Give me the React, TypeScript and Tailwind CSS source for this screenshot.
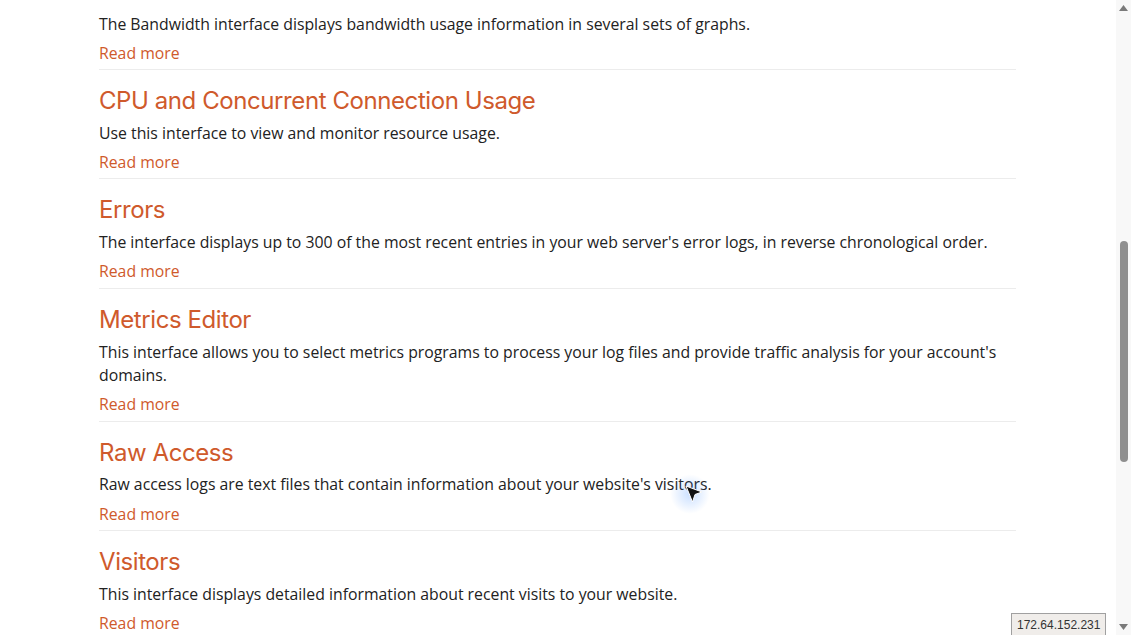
const items = [
  {
    title: "CPU and Concurrent Connection Usage",
    text: "Use this interface to view and monitor resource usage.",
  },
  {
    title: "Errors",
    text: "The interface displays up to 300 of the most recent entries in your web server's error logs, in reverse chronological order.",
  },
  {
    title: "Metrics Editor",
    text: "This interface allows you to select metrics programs to process your log files and provide traffic analysis for your account's domains.",
  },
  {
    title: "Raw Access",
    text: "Raw access logs are text files that contain information about your website's visitors.",
  },
  {
    title: "Visitors",
    text: "This interface displays detailed information about recent visits to your website.",
  },
];

function ReadMore() {
  return (
    <a href="#" className="block text-[15.8px] leading-[23.4px] text-[#cf5a2c]">
      Read more
    </a>
  );
}

export default function App() {
  return (
    <div className="relative flex h-[635px] w-full overflow-hidden bg-white font-['Open_Sans',sans-serif] text-[#222]">
      {/* Page content */}
      <div className="flex-1 pl-[99px] pr-[100px]">
        <div className="border-b border-[#ececec] pt-[12.5px] pb-[3.7px]">
          <p className="mb-[6px] text-[15.8px] leading-[23.4px]">
            The Bandwidth interface displays bandwidth usage information in several sets of graphs.
          </p>
          <ReadMore />
        </div>
        {items.map((item) => (
          <div key={item.title} className="border-b border-[#ececec] pt-[16px] pb-[4px]">
            <h2 className="mb-[6.2px] font-['Inter',sans-serif] text-[24px] leading-[29.6px] font-normal tracking-[-0.42px] text-[#cf5a2c]">
              {item.title}
            </h2>
            <p className="mb-[5.8px] text-[15.8px] leading-[23.4px]">{item.text}</p>
            <ReadMore />
          </div>
        ))}
      </div>

      {/* Scrollbar */}
      <div className="flex w-[15px] flex-col items-center bg-[#f8f8f8]">
        <svg width="9" height="6" viewBox="0 0 9 6" className="mt-[5px]">
          <path d="M4.5 0 L9 6 L0 6 Z" fill="#7a7a7a" />
        </svg>
        <div className="mt-[230px] h-[221px] w-[8px] rounded-full bg-[#8f8f8f]" />
        <div className="flex-1" />
        <svg width="9" height="6" viewBox="0 0 9 6" className="mb-[5px]">
          <path d="M0 0 L9 0 L4.5 6 Z" fill="#7a7a7a" />
        </svg>
      </div>

      {/* Status IP */}
      <div className="absolute left-[1011px] top-[613px] h-[24px] border border-[#a0a0a0] bg-[#f0edea] px-[5px] pt-[3px] font-['Liberation_Sans',sans-serif] text-[12px] leading-[16px] text-[#333]">
        172.64.152.231
      </div>

      {/* Mouse cursor */}
      <div className="absolute left-[670px] top-[474px] h-[40px] w-[40px] rounded-full bg-[radial-gradient(circle,rgba(80,150,255,0.3)_0%,rgba(80,150,255,0)_70%)]" />
      <svg width="18" height="18" viewBox="0 0 18 18" className="absolute left-[685px] top-[485px]">
        <path d="M1 1 L17 7 L10 9.5 L7.5 17 Z" fill="#111" stroke="#fff" strokeWidth="1" strokeLinejoin="round" />
      </svg>
    </div>
  );
}
